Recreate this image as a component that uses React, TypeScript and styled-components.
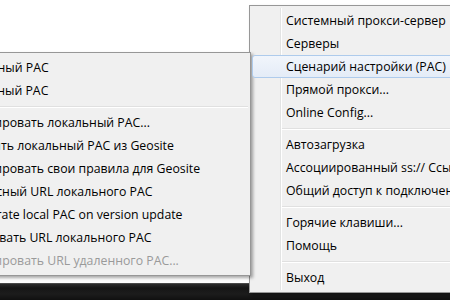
import React from "react";
import styled, { createGlobalStyle, css } from "styled-components";

const GlobalStyle = createGlobalStyle`
  html, body {
    margin: 0;
    padding: 0;
    background: #ffffff;
    overflow: hidden;
  }
  * { box-sizing: border-box; }
`;

const Desktop = styled.div`
  position: relative;
  width: 450px;
  height: 300px;
  overflow: hidden;
  background: #ffffff;
  display: flex;
  flex-direction: column;
  justify-content: flex-end;
  font-family: "Open Sans", "Noto Sans", sans-serif;
`;

const Taskbar = styled.div`
  height: 17px;
  background: linear-gradient(180deg, #2c2c2c 0px, #161616 4px, #1c1c1c 10px, #101010 100%);
  border-top: 1px solid #4a4a4a;
`;

const Menu = styled.div<{ $left: number; $top: number; $width: number; $gutter: number }>`
  position: absolute;
  left: ${(p) => p.$left}px;
  top: ${(p) => p.$top}px;
  width: ${(p) => p.$width}px;
  background: #f0f0f0;
  border: 1px solid #979797;
  padding: 3px 2px;
  box-shadow: 2px 2px 3px rgba(0, 0, 0, 0.35);
  display: flex;
  flex-direction: column;

  &::before {
    content: "";
    position: absolute;
    top: 2px;
    bottom: 2px;
    left: ${(p) => p.$gutter}px;
    width: 1px;
    background: #e2e3e3;
    box-shadow: 1px 0 0 #ffffff;
  }
`;

const Item = styled.div<{ $active?: boolean; $disabled?: boolean; $textX: number }>`
  position: relative;
  height: 23px;
  flex: none;
  display: flex;
  align-items: center;
  padding-left: ${(p) => p.$textX}px;
  font-size: 12.3px;
  white-space: nowrap;
  color: ${(p) => (p.$disabled ? "#9a9a9a" : "#000000")};
  border: 1px solid transparent;
  border-radius: 3px;
  ${(p) =>
    p.$active &&
    css`
      z-index: 1;
      border-color: #aecbec;
      background: linear-gradient(180deg, #f1f5fb 0%, #e4ecf7 100%);
    `}
`;

const Separator = styled.div<{ $gutter: number }>`
  height: 9px;
  flex: none;
  display: flex;
  align-items: center;
  padding-left: ${(p) => p.$gutter}px;

  &::after {
    content: "";
    flex: 1;
    height: 1px;
    background: #e0e0e0;
    box-shadow: 0 1px 0 #ffffff;
  }
`;

type Entry = { label?: string; sep?: boolean; active?: boolean; disabled?: boolean };

const mainItems: Entry[] = [
  { label: "Системный прокси-сервер" },
  { label: "Серверы" },
  { label: "Сценарий настройки (PAC)", active: true },
  { label: "Прямой прокси..." },
  { label: "Online Config..." },
  { sep: true },
  { label: "Автозагрузка" },
  { label: "Ассоциированный ss:// Ссылки" },
  { label: "Общий доступ к подключению..." },
  { sep: true },
  { label: "Горячие клавиши..." },
  { label: "Помощь" },
  { sep: true },
  { label: "Выход" },
];

const pacItems: Entry[] = [
  { label: "Локальный PAC" },
  { label: "Удаленный PAC" },
  { sep: true },
  { label: "Редактировать локальный PAC..." },
  { label: "Обновить локальный PAC из Geosite" },
  { label: "Редактировать свои правила для Geosite" },
  { label: "Безопасный URL локального PAC" },
  { label: "Regenerate local PAC on version update" },
  { label: "Копировать URL локального PAC" },
  { label: "Редактировать URL удаленного PAC...", disabled: true },
];

const PopupMenu: React.FC<{
  items: Entry[];
  left: number;
  top: number;
  width: number;
}> = ({ items, left, top, width }) => {
  const gutter = 30;
  return (
    <Menu $left={left} $top={top} $width={width} $gutter={gutter}>
      {items.map((it, i) =>
        it.sep ? (
          <Separator key={i} $gutter={gutter - 1} />
        ) : (
          <Item key={i} $textX={33} $active={it.active} $disabled={it.disabled}>
            {it.label}
          </Item>
        )
      )}
    </Menu>
  );
};

export default function App() {
  return (
    <Desktop>
      <GlobalStyle />
      <PopupMenu items={mainItems} left={249} top={5} width={260} />
      <PopupMenu items={pacItems} left={-83} top={52} width={334} />
      <Taskbar />
    </Desktop>
  );
}
